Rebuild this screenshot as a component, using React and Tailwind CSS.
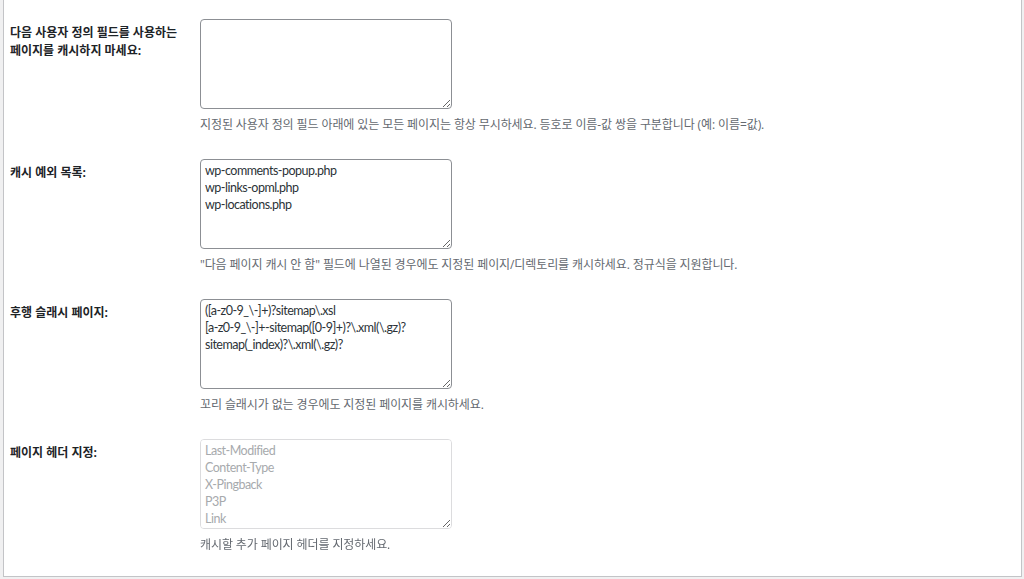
import React from 'react';

const rows = [
  {
    label: ['다음 사용자 정의 필드를 사용하는', '페이지를 캐시하지 마세요:'],
    value: '',
    help: '지정된 사용자 정의 필드 아래에 있는 모든 페이지는 항상 무시하세요. 등호로 이름-값 쌍을 구분합니다 (예: 이름=값).',
  },
  {
    label: ['캐시 예외 목록:'],
    value: 'wp-comments-popup.php\nwp-links-opml.php\nwp-locations.php',
    help: '"다음 페이지 캐시 안 함" 필드에 나열된 경우에도 지정된 페이지/디렉토리를 캐시하세요. 정규식을 지원합니다.',
  },
  {
    label: ['후행 슬래시 페이지:'],
    value: '([a-z0-9_\\-]+)?sitemap\\.xsl\n[a-z0-9_\\-]+-sitemap([0-9]+)?\\.xml(\\.gz)?\nsitemap(_index)?\\.xml(\\.gz)?',
    help: '꼬리 슬래시가 없는 경우에도 지정된 페이지를 캐시하세요.',
  },
  {
    label: ['페이지 헤더 지정:'],
    placeholder: 'Last-Modified\nContent-Type\nX-Pingback\nP3P\nLink',
    help: '캐시할 추가 페이지 헤더를 지정하세요.',
    light: true,
  },
];

const font = { fontFamily: '"Open Sans", "Noto Sans CJK KR", sans-serif' };
const fieldFont = { fontFamily: 'Lato, "Noto Sans CJK KR", sans-serif' };

const SettingRow = ({ row }) => (
  <div className="flex h-[140px]">
    <div className="w-[196px] shrink-0 pl-[6px] pt-[20px]">
      <div className="text-[12px] leading-[18px] font-bold text-[#1d2327]">
        {row.label.map((line, i) => (
          <div key={i}>{line}</div>
        ))}
      </div>
    </div>
    <div className="pt-[15px]">
      <textarea
        defaultValue={row.value}
        placeholder={row.placeholder}
        style={fieldFont}
        className={`block w-[252px] h-[90px] rounded-[4px] border bg-white pl-[4px] pr-[6px] py-[2px] text-[12.5px] leading-[17px] tracking-[-0.5px] text-[#2c3338] placeholder:text-[#a7aaad] outline-none resize-y ${
          row.light ? 'border-[#dcdcde]' : 'border-[#8c8f94]'
        }`}
      />
      <p className="mt-[6px] text-[12px] leading-[20px] text-[#646970] tracking-[-0.1px] whitespace-nowrap">
        {row.help}
      </p>
    </div>
  </div>
);

export default function App() {
  return (
    <div className="h-[579px] overflow-hidden bg-[#f0f0f1] pl-[3px] pr-[2px]" style={font}>
      <div className="h-[577px] bg-white border-x border-b border-[#c3c4c7] pt-[4px]">
        {rows.map((row, i) => (
          <SettingRow key={i} row={row} />
        ))}
      </div>
    </div>
  );
}
